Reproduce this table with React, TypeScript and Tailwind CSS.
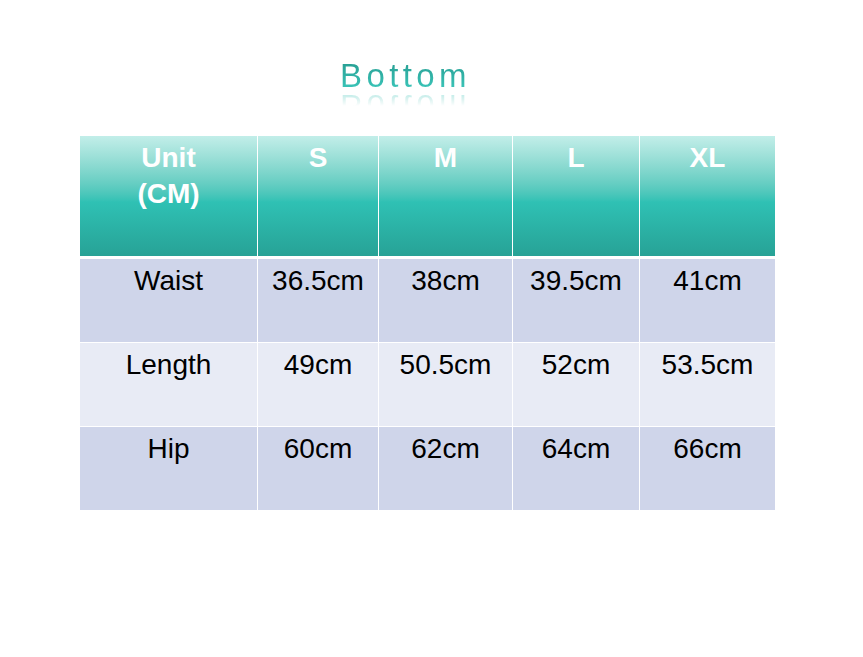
const sizes = ["S", "M", "L", "XL"];

const rows = [
  { name: "Waist", values: ["36.5cm", "38cm", "39.5cm", "41cm"], bg: "bg-[#cfd5ea]" },
  { name: "Length", values: ["49cm", "50.5cm", "52cm", "53.5cm"], bg: "bg-[#e8ebf5]" },
  { name: "Hip", values: ["60cm", "62cm", "64cm", "66cm"], bg: "bg-[#cfd5ea]" },
];

const headCell =
  "h-[120px] bg-gradient-to-b from-[#c2eee9] via-[#2fc1b4] via-[55%] to-[#27a296] text-center text-[28px] font-bold leading-[36px] text-white pt-[4px]";

export default function App() {
  return (
    <div className="h-[657px] w-[863px] bg-white font-['Liberation_Sans',Arial,sans-serif]">
      <div className="pl-[340px] pt-[57px]">
        <h1 className="inline-block bg-gradient-to-b from-[#24978c] to-[#3fcfc2] bg-clip-text text-[33px] font-normal leading-[38px] tracking-[4.4px] text-transparent [-webkit-box-reflect:below_-8px_linear-gradient(transparent_50%,rgba(255,255,255,0.5))]">
          Bottom
        </h1>
      </div>

      <div className="ml-[80px] mt-[41px] w-[695px]">
        <div className="grid grid-cols-[177px_120px_133px_126px_135px] gap-x-px">
          <div className={headCell}>
            Unit
            <br />
            (CM)
          </div>
          {sizes.map((s) => (
            <div key={s} className={headCell}>
              {s}
            </div>
          ))}
        </div>

        <div className="mt-[3px] grid grid-cols-[177px_120px_133px_126px_135px] gap-px">
          {rows.map((r) => (
            <>
              <div
                key={r.name}
                className={`${r.bg} h-[83px] pt-[6px] text-center text-[28px] leading-[32px] text-black`}
              >
                {r.name}
              </div>
              {r.values.map((v, i) => (
                <div
                  key={r.name + i}
                  className={`${r.bg} h-[83px] pt-[6px] text-center text-[28px] leading-[32px] text-black`}
                >
                  {v}
                </div>
              ))}
            </>
          ))}
        </div>
      </div>
    </div>
  );
}
